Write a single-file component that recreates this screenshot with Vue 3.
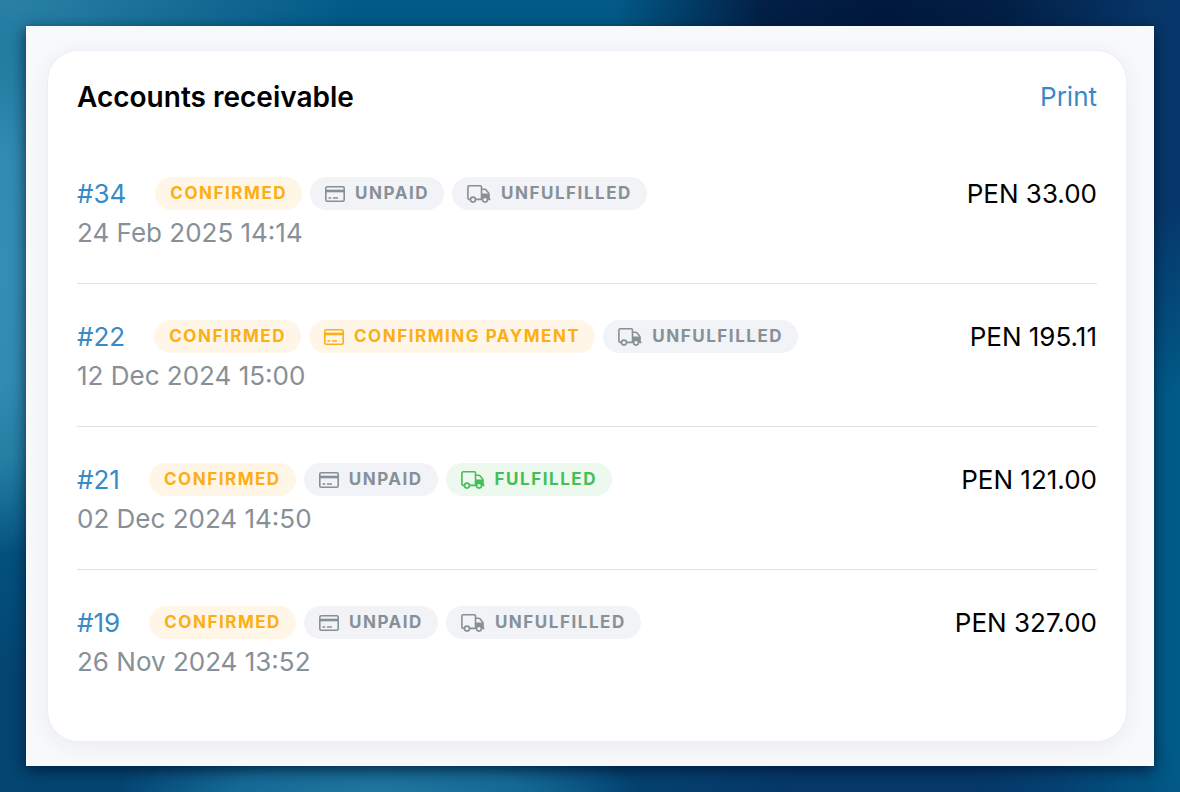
<script setup>
const orders = [
  {
    id: 34,
    date: '24 Feb 2025 14:14',
    amount: '33.00',
    badges: [
      { text: 'Confirmed', tone: 'amber' },
      { text: 'Unpaid', tone: 'gray', icon: 'card' },
      { text: 'Unfulfilled', tone: 'gray', icon: 'truck' },
    ],
  },
  {
    id: 22,
    date: '12 Dec 2024 15:00',
    amount: '195.11',
    badges: [
      { text: 'Confirmed', tone: 'amber' },
      { text: 'Confirming payment', tone: 'amber', icon: 'card' },
      { text: 'Unfulfilled', tone: 'gray', icon: 'truck' },
    ],
  },
  {
    id: 21,
    date: '02 Dec 2024 14:50',
    amount: '121.00',
    badges: [
      { text: 'Confirmed', tone: 'amber' },
      { text: 'Unpaid', tone: 'gray', icon: 'card' },
      { text: 'Fulfilled', tone: 'green', icon: 'truck' },
    ],
  },
  {
    id: 19,
    date: '26 Nov 2024 13:52',
    amount: '327.00',
    badges: [
      { text: 'Confirmed', tone: 'amber' },
      { text: 'Unpaid', tone: 'gray', icon: 'card' },
      { text: 'Unfulfilled', tone: 'gray', icon: 'truck' },
    ],
  },
]
</script>

<template>
  <div class="backdrop">
    <main class="panel">
      <section class="card" aria-labelledby="receivable-title">
        <header class="card-header">
          <h1 id="receivable-title">Accounts receivable</h1>
          <a class="link" href="#print">Print</a>
        </header>
        <ul class="orders">
          <li v-for="order in orders" :key="order.id" class="order">
            <div class="summary">
              <a class="link order-link" :href="`#order-${order.id}`">#{{ order.id }}</a>
              <span class="badges">
                <span v-for="badge in order.badges" :key="badge.text" class="badge" :class="badge.tone">
                  <svg v-if="badge.icon === 'card'" class="card-icon" viewBox="0 0 20 16" fill="none" stroke="currentColor" aria-hidden="true">
                    <rect x="0.8" y="0.8" width="18.4" height="14.4" rx="1.4" stroke-width="1.6" />
                    <path d="M1 5h18" stroke-width="2.6" />
                    <path d="M3.5 12h2.8M8 12h5" stroke-width="1.5" />
                  </svg>
                  <svg v-else-if="badge.icon === 'truck'" class="truck-icon" viewBox="0 0 24 18" fill="none" stroke="currentColor" stroke-width="1.6" stroke-linejoin="round" aria-hidden="true">
                    <path d="M3.3 14.4H2.2A1.3 1.3 0 0 1 .9 13.1V2.1A1.3 1.3 0 0 1 2.2.8h11a1.3 1.3 0 0 1 1.3 1.3v12.3H8.7" />
                    <path d="M14.5 4.2h2.9c.7 0 1.2.2 1.7.7l2.3 2.8c.4.4.6.8.6 1.3v5.4h1.4" />
                    <path d="M14.5 8.6h7.6v5.8h-1.5a2.7 2.7 0 0 0-5.1-.9l-1 .6Z" fill="currentColor" stroke="none" />
                    <circle cx="6" cy="14.6" r="2.5" />
                    <circle cx="18" cy="14.6" r="2.5" />
                  </svg>
                  <span>{{ badge.text }}</span>
                </span>
              </span>
              <span class="amount">PEN {{ order.amount }}</span>
            </div>
            <time class="date">{{ order.date }}</time>
          </li>
        </ul>
      </section>
    </main>
  </div>
</template>

<style>
body {
  background: #044f7c;
}
</style>

<style scoped>
.backdrop {
  box-sizing: border-box;
  min-height: 100vh;
  padding: 26px;
  font: 400 26px/39px Inter, "Liberation Sans", sans-serif;
  color: #000;
  background:
    radial-gradient(ellipse 20% 36% at 0% 34%, #358eb5 0%, #328bb1 40%, #2680a5 65%, transparent 100%),
    radial-gradient(ellipse 30% 24% at 0% 0%, #2981a5 0%, transparent 100%),
    radial-gradient(ellipse 22% 8% at 32% 100%, #1f779f 0%, #146a95 55%, transparent 100%),
    radial-gradient(ellipse 23% 24% at 75% 0%, #01183d 0%, #021f45 45%, transparent 100%),
    radial-gradient(ellipse 30% 40% at 100% 10%, #07376a 0%, #07376a 40%, transparent 100%),
    radial-gradient(ellipse 26% 16% at 75% 100%, #06386a 0%, #06386a 30%, transparent 100%),
    linear-gradient(90deg, transparent 80%, #015b88 96%),
    linear-gradient(180deg, #025a87 0%, #035985 60%, #044572 85%, #044572 100%);
}

.panel {
  padding: 25px 28px 25px 22px;
  background: #f8f9fb;
  box-shadow: 0 4px 14px rgba(0, 15, 45, 0.75);
}

.card {
  padding: 24px 29px 29px;
  background: #fff;
  border-radius: 30px;
  box-shadow: 0 0 0 1px #ebeff7, 0 4px 24px rgba(40, 45, 60, 0.07);
}

.card-header {
  display: flex;
  align-items: center;
  justify-content: space-between;
  margin-bottom: 22px;
  line-height: 44px;
}

h1 {
  margin: 0;
  font-size: 28px;
  font-weight: 600;
}

.link {
  color: #378ac7;
  text-decoration: none;
}

.orders {
  margin: 0;
  padding: 0;
  list-style: none;
}

.order {
  padding: 33px 0 31px;
  border-bottom: 1px solid #dfe1e4;
}

.order:last-child {
  border-bottom: 0;
}

.summary {
  display: flex;
  align-items: center;
}

.order-link {
  margin-right: 29px;
}

.badges {
  display: flex;
  gap: 8px;
}

.badge {
  display: inline-flex;
  align-items: center;
  gap: 10px;
  padding: 0 15px;
  border-radius: 17px;
  font-size: 17px;
  font-weight: 700;
  line-height: 33px;
  letter-spacing: 0.09em;
  text-transform: uppercase;
  white-space: nowrap;
}

.amber {
  color: #fcae14;
  background: #fff6e8;
}

.gray {
  color: #879097;
  background: #f1f3f6;
}

.green {
  color: #43bf57;
  background: #edf8ef;
}

.card-icon {
  width: 20px;
  height: 16px;
}

.truck-icon {
  width: 24px;
  height: 18px;
}

.amount {
  margin-left: auto;
  white-space: nowrap;
}

.date {
  display: block;
  color: #879097;
}
</style>
